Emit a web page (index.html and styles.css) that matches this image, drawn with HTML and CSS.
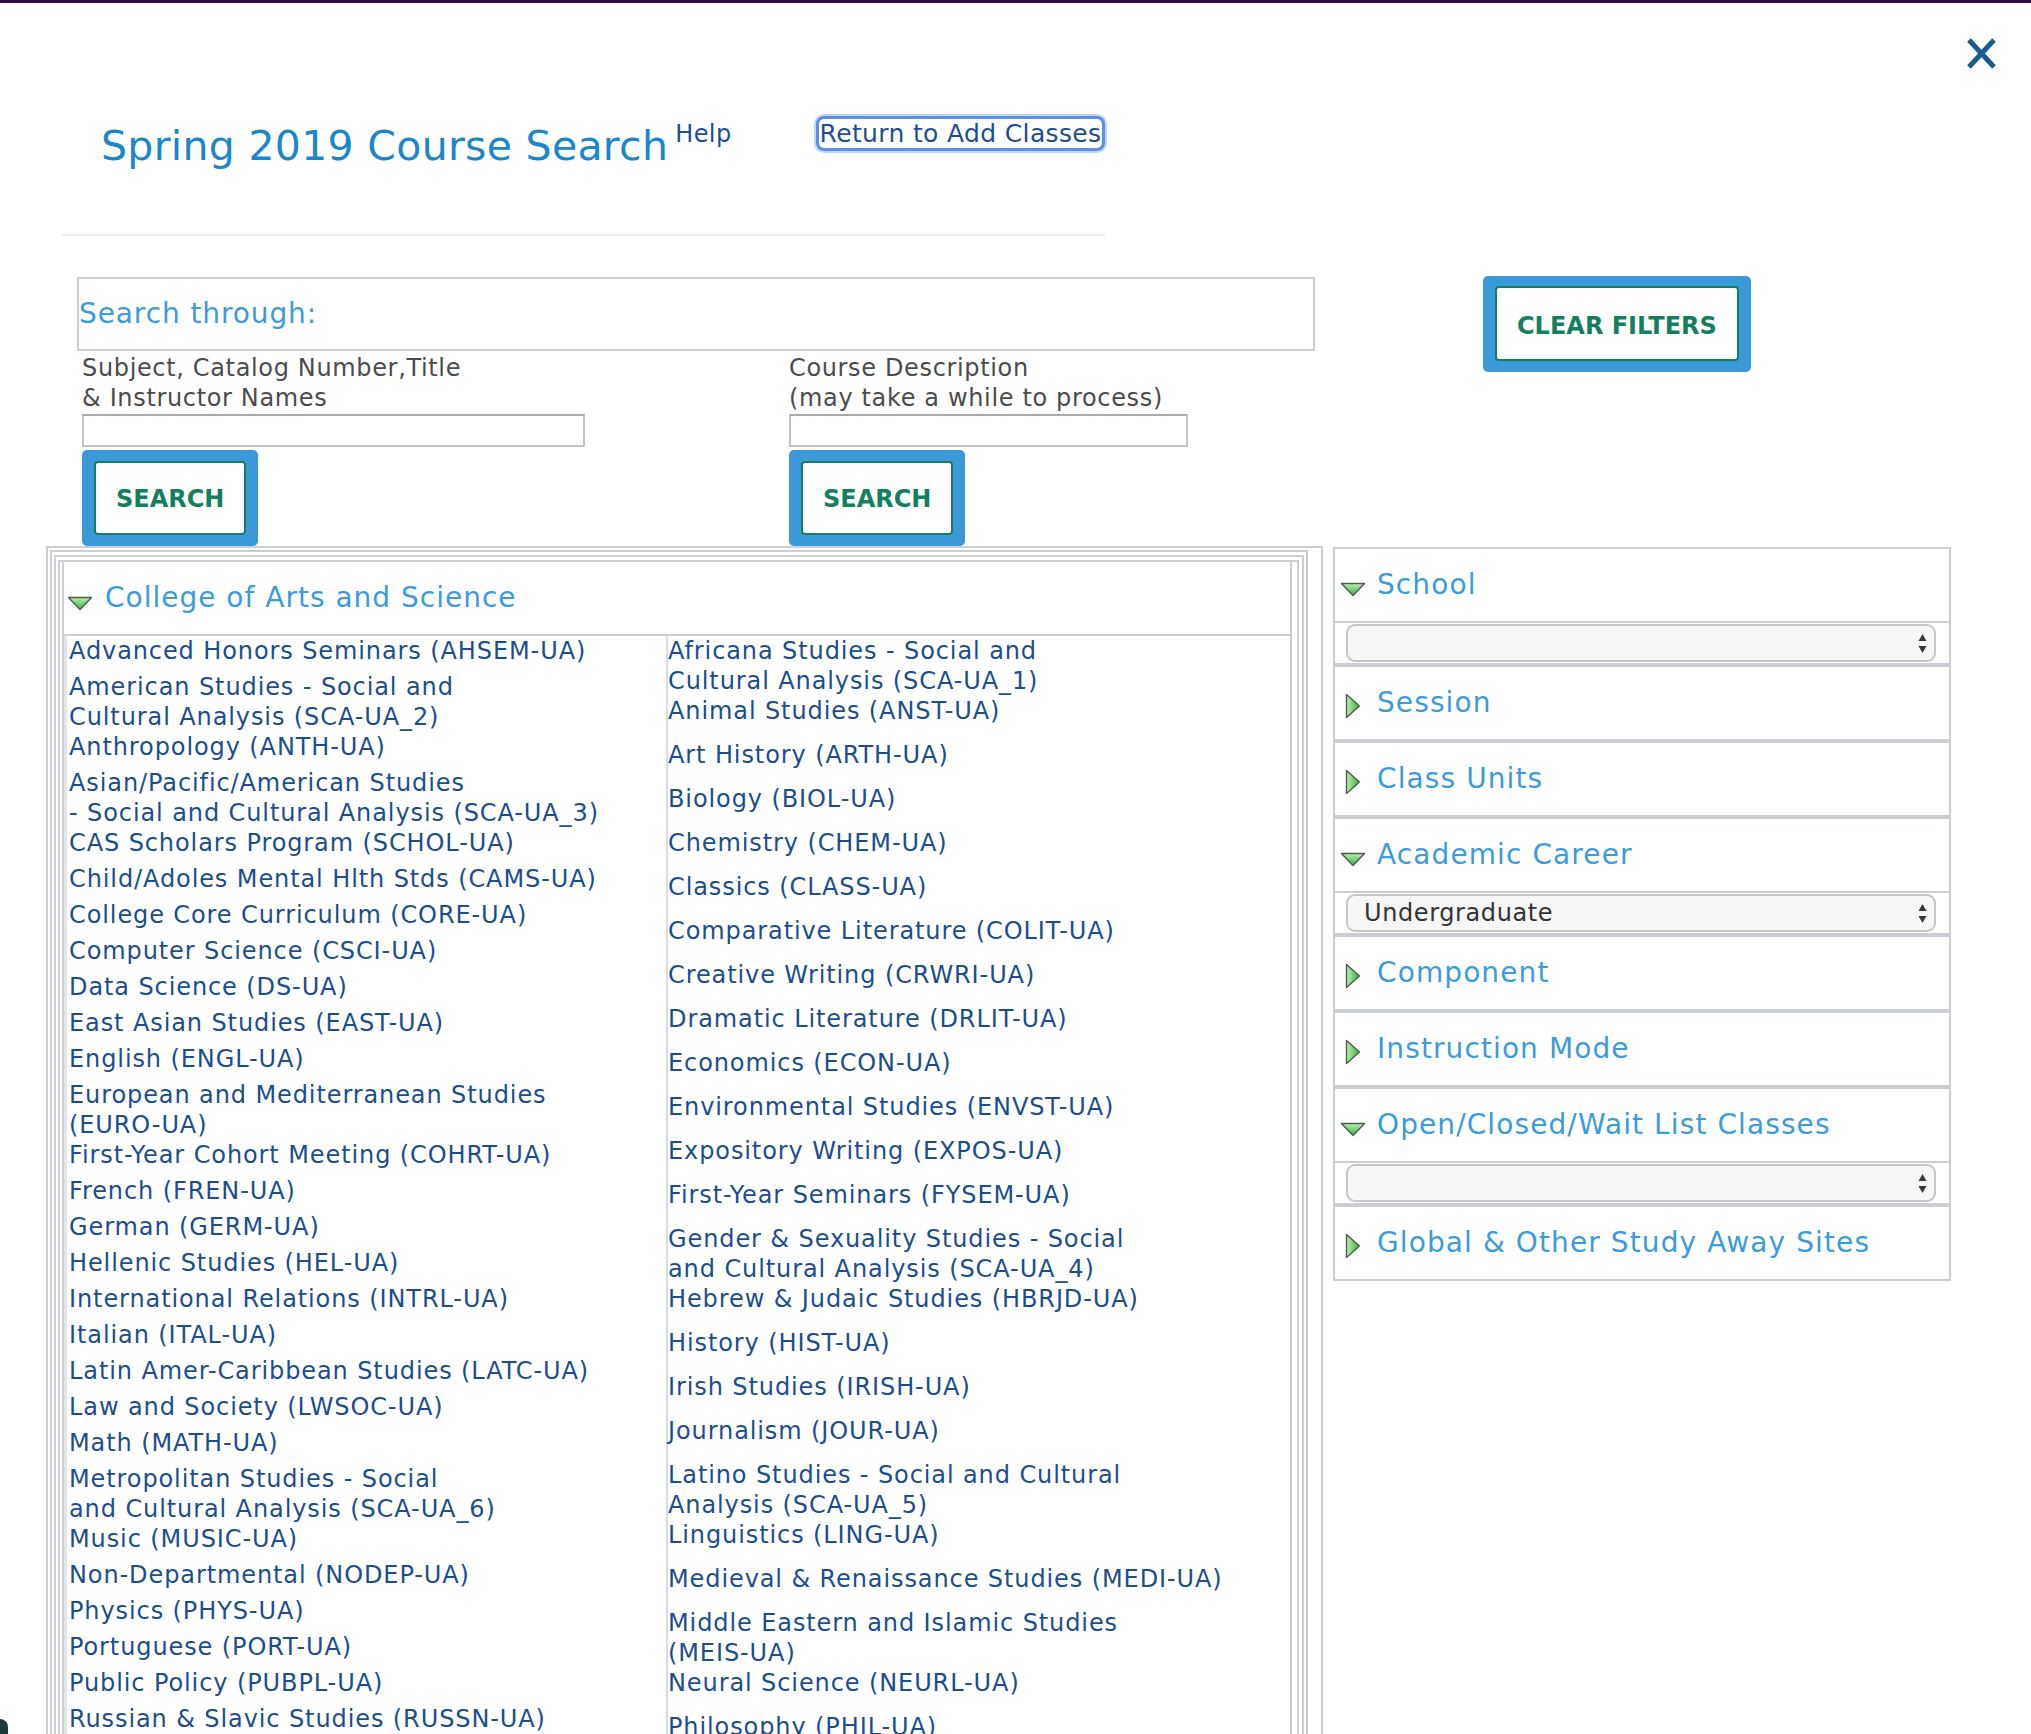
FILE: index.html
```html
<!DOCTYPE html>
<html lang="en">
<head>
<meta charset="utf-8">
<title>Spring 2019 Course Search</title>
<link rel="stylesheet" href="styles.css">
</head>
<body>
<svg class="defs" width="0" height="0" aria-hidden="true">
  <defs>
    <linearGradient id="gdown" x1="0" y1="0" x2="0" y2="1">
      <stop offset="0" stop-color="#b9f2ae"/>
      <stop offset="1" stop-color="#3cae48"/>
    </linearGradient>
    <linearGradient id="gright" x1="0" y1="0" x2="1" y2="0">
      <stop offset="0" stop-color="#b9f2ae"/>
      <stop offset="1" stop-color="#3cae48"/>
    </linearGradient>
  </defs>
</svg>
<div class="topbar"></div>
<div class="modal">
  <button class="close" aria-label="Close">
    <svg width="31" height="31" viewBox="0 0 31 31"><path d="M3 2 L28 29 M28 2 L3 29" stroke="#1a5b8c" stroke-width="5" fill="none"/></svg>
  </button>

  <div class="head">
    <h1 class="title">Spring 2019 Course Search</h1>
    <a class="help" href="#">Help</a>
    <a class="return" href="#">Return to Add Classes</a>
  </div>
  <div class="sep"></div>

  <div class="search-row">
    <div class="search-left">
      <div class="through">Search through:</div>
      <div class="fields">
        <div class="field">
          <div class="label">Subject, Catalog Number,Title<br>&amp; Instructor Names</div>
          <input class="inp inp-l" type="text">
          <div class="btnwrap"><button class="btn">SEARCH</button></div>
        </div>
        <div class="field">
          <div class="label">Course Description<br>(may take a while to process)</div>
          <input class="inp inp-r" type="text">
          <div class="btnwrap"><button class="btn">SEARCH</button></div>
        </div>
      </div>
    </div>
    <div class="btnwrap clearwrap"><button class="btn btn-clear">CLEAR FILTERS</button></div>
  </div>

  <div class="main">
    <div class="f1"><div class="f2"><div class="f3"><div class="f4"><div class="f5">
      <div class="lhead">
        <svg class="tri-down" width="26" height="15" viewBox="0 0 26 15"><polygon points="1.5,1.5 24.5,1.5 13,13.5" fill="url(#gdown)" stroke="#4f5a50" stroke-width="1.4" stroke-linejoin="round"/></svg>
        <span class="lt">College of Arts and Science</span>
      </div>
      <div class="cols">
        <div class="col col1">
          <a class="it" href="#">Advanced Honors Seminars (AHSEM-UA)</a>
          <a class="it" href="#">American Studies - Social and<br>Cultural Analysis (SCA-UA_2)</a>
          <a class="it" href="#">Anthropology (ANTH-UA)</a>
          <a class="it" href="#">Asian/Pacific/American Studies<br>- Social and Cultural Analysis (SCA-UA_3)</a>
          <a class="it" href="#">CAS Scholars Program (SCHOL-UA)</a>
          <a class="it" href="#">Child/Adoles Mental Hlth Stds (CAMS-UA)</a>
          <a class="it" href="#">College Core Curriculum (CORE-UA)</a>
          <a class="it" href="#">Computer Science (CSCI-UA)</a>
          <a class="it" href="#">Data Science (DS-UA)</a>
          <a class="it" href="#">East Asian Studies (EAST-UA)</a>
          <a class="it" href="#">English (ENGL-UA)</a>
          <a class="it" href="#">European and Mediterranean Studies<br>(EURO-UA)</a>
          <a class="it" href="#">First-Year Cohort Meeting (COHRT-UA)</a>
          <a class="it" href="#">French (FREN-UA)</a>
          <a class="it" href="#">German (GERM-UA)</a>
          <a class="it" href="#">Hellenic Studies (HEL-UA)</a>
          <a class="it" href="#">International Relations (INTRL-UA)</a>
          <a class="it" href="#">Italian (ITAL-UA)</a>
          <a class="it" href="#">Latin Amer-Caribbean Studies (LATC-UA)</a>
          <a class="it" href="#">Law and Society (LWSOC-UA)</a>
          <a class="it" href="#">Math (MATH-UA)</a>
          <a class="it" href="#">Metropolitan Studies - Social<br>and Cultural Analysis (SCA-UA_6)</a>
          <a class="it" href="#">Music (MUSIC-UA)</a>
          <a class="it" href="#">Non-Departmental (NODEP-UA)</a>
          <a class="it" href="#">Physics (PHYS-UA)</a>
          <a class="it" href="#">Portuguese (PORT-UA)</a>
          <a class="it" href="#">Public Policy (PUBPL-UA)</a>
          <a class="it" href="#">Russian &amp; Slavic Studies (RUSSN-UA)</a>
        </div>
        <div class="col col2">
          <a class="it" href="#">Africana Studies - Social and<br>Cultural Analysis (SCA-UA_1)</a>
          <a class="it" href="#">Animal Studies (ANST-UA)</a>
          <a class="it" href="#">Art History (ARTH-UA)</a>
          <a class="it" href="#">Biology (BIOL-UA)</a>
          <a class="it" href="#">Chemistry (CHEM-UA)</a>
          <a class="it" href="#">Classics (CLASS-UA)</a>
          <a class="it" href="#">Comparative Literature (COLIT-UA)</a>
          <a class="it" href="#">Creative Writing (CRWRI-UA)</a>
          <a class="it" href="#">Dramatic Literature (DRLIT-UA)</a>
          <a class="it" href="#">Economics (ECON-UA)</a>
          <a class="it" href="#">Environmental Studies (ENVST-UA)</a>
          <a class="it" href="#">Expository Writing (EXPOS-UA)</a>
          <a class="it" href="#">First-Year Seminars (FYSEM-UA)</a>
          <a class="it" href="#">Gender &amp; Sexuality Studies - Social<br>and Cultural Analysis (SCA-UA_4)</a>
          <a class="it" href="#">Hebrew &amp; Judaic Studies (HBRJD-UA)</a>
          <a class="it" href="#">History (HIST-UA)</a>
          <a class="it" href="#">Irish Studies (IRISH-UA)</a>
          <a class="it" href="#">Journalism (JOUR-UA)</a>
          <a class="it" href="#">Latino Studies - Social and Cultural<br>Analysis (SCA-UA_5)</a>
          <a class="it" href="#">Linguistics (LING-UA)</a>
          <a class="it" href="#">Medieval &amp; Renaissance Studies (MEDI-UA)</a>
          <a class="it" href="#">Middle Eastern and Islamic Studies<br>(MEIS-UA)</a>
          <a class="it" href="#">Neural Science (NEURL-UA)</a>
          <a class="it" href="#">Philosophy (PHIL-UA)</a>
        </div>
      </div>
    </div></div></div></div></div>

    <div class="panel">
      <div class="sec">
        <div class="phead"><span class="ic ic-down"><svg width="26" height="15" viewBox="0 0 26 15"><polygon points="1.5,1.5 24.5,1.5 13,13.5" fill="url(#gdown)" stroke="#4f5a50" stroke-width="1.4" stroke-linejoin="round"/></svg></span><span class="pt">School</span></div>
        <div class="selrow"><div class="select"><span class="sv"></span><svg width="9" height="21" viewBox="0 0 9 21"><polygon points="0.5,8 4.5,1 8.5,8" fill="#3a3a3a"/><polygon points="0.5,13 4.5,20 8.5,13" fill="#3a3a3a"/></svg></div></div>
      </div>
      <div class="sec">
        <div class="phead closed"><span class="ic ic-right"><svg width="16" height="26" viewBox="0 0 16 26"><polygon points="1.5,1.5 14.5,13 1.5,24.5" fill="url(#gright)" stroke="#4f5a50" stroke-width="1.4" stroke-linejoin="round"/></svg></span><span class="pt">Session</span></div>
      </div>
      <div class="sec">
        <div class="phead closed"><span class="ic ic-right"><svg width="16" height="26" viewBox="0 0 16 26"><polygon points="1.5,1.5 14.5,13 1.5,24.5" fill="url(#gright)" stroke="#4f5a50" stroke-width="1.4" stroke-linejoin="round"/></svg></span><span class="pt">Class Units</span></div>
      </div>
      <div class="sec">
        <div class="phead"><span class="ic ic-down"><svg width="26" height="15" viewBox="0 0 26 15"><polygon points="1.5,1.5 24.5,1.5 13,13.5" fill="url(#gdown)" stroke="#4f5a50" stroke-width="1.4" stroke-linejoin="round"/></svg></span><span class="pt">Academic Career</span></div>
        <div class="selrow"><div class="select"><span class="sv">Undergraduate</span><svg width="9" height="21" viewBox="0 0 9 21"><polygon points="0.5,8 4.5,1 8.5,8" fill="#3a3a3a"/><polygon points="0.5,13 4.5,20 8.5,13" fill="#3a3a3a"/></svg></div></div>
      </div>
      <div class="sec">
        <div class="phead closed"><span class="ic ic-right"><svg width="16" height="26" viewBox="0 0 16 26"><polygon points="1.5,1.5 14.5,13 1.5,24.5" fill="url(#gright)" stroke="#4f5a50" stroke-width="1.4" stroke-linejoin="round"/></svg></span><span class="pt">Component</span></div>
      </div>
      <div class="sec">
        <div class="phead closed"><span class="ic ic-right"><svg width="16" height="26" viewBox="0 0 16 26"><polygon points="1.5,1.5 14.5,13 1.5,24.5" fill="url(#gright)" stroke="#4f5a50" stroke-width="1.4" stroke-linejoin="round"/></svg></span><span class="pt">Instruction Mode</span></div>
      </div>
      <div class="sec">
        <div class="phead"><span class="ic ic-down"><svg width="26" height="15" viewBox="0 0 26 15"><polygon points="1.5,1.5 24.5,1.5 13,13.5" fill="url(#gdown)" stroke="#4f5a50" stroke-width="1.4" stroke-linejoin="round"/></svg></span><span class="pt">Open/Closed/Wait List Classes</span></div>
        <div class="selrow"><div class="select"><span class="sv"></span><svg width="9" height="21" viewBox="0 0 9 21"><polygon points="0.5,8 4.5,1 8.5,8" fill="#3a3a3a"/><polygon points="0.5,13 4.5,20 8.5,13" fill="#3a3a3a"/></svg></div></div>
      </div>
      <div class="sec">
        <div class="phead closed"><span class="ic ic-right"><svg width="16" height="26" viewBox="0 0 16 26"><polygon points="1.5,1.5 14.5,13 1.5,24.5" fill="url(#gright)" stroke="#4f5a50" stroke-width="1.4" stroke-linejoin="round"/></svg></span><span class="pt">Global &amp; Other Study Away Sites</span></div>
      </div>
    </div>
  </div>
</div>
<div class="corner"></div>
</body>
</html>
```

FILE: styles.css
```css
* { box-sizing: border-box; }
html, body { margin: 0; padding: 0; height: 1734px; overflow: hidden; }
body { background: #fff; font-family: "DejaVu Sans", "Liberation Sans", sans-serif; }

.defs { display: block; width: 0; height: 0; }

.topbar { height: 3px; background: #2b0f3d; }
.modal { position: relative; background: #fff; }

.close {
  position: absolute; top: 35px; right: 34px;
  width: 31px; height: 31px; padding: 0; border: 0; background: none;
}
.close svg { display: block; }

/* header */
.head { display: flex; align-items: flex-start; padding: 115px 0 0 101px; }
.title {
  margin: 4px 0 0; font-size: 41px; line-height: 48px; font-weight: normal;
  color: #1b87c9; letter-spacing: 0.3px;
}
.help {
  margin: 2px 0 0 7px; font-size: 24px; line-height: 28px; letter-spacing: 0.4px;
  color: #1d4e8f; text-decoration: none;
}
.return {
  margin: 0.6px 0 0 87px; padding: 0 1px; font-size: 25px; line-height: 29px;
  letter-spacing: 0.35px;
  color: #1d4e8f; text-decoration: none; border-radius: 5px;
  box-shadow: 0 0 0 3px #5a90ea, 0 0 0 5px rgba(120, 165, 240, 0.45);
}
.sep { margin: 64px 0 0 62px; width: 1043px; height: 2px; background: #ececec; }

/* search */
.search-row { display: flex; align-items: flex-start; margin-top: 41px; padding-left: 77px; }
.search-left { width: 1238px; }
.through {
  height: 74px; border: 2px solid #cbcfd4; line-height: 70px;
  font-size: 28px; letter-spacing: 0.9px; color: #3b9bdb;
}
.fields { display: grid; grid-template-columns: 707px 1fr; padding-left: 5px; }
.label {
  margin-top: 2px; font-size: 24px; line-height: 30px; letter-spacing: 0.65px; color: #4b4b4b;
}
.inp {
  display: block; margin-top: 1px; height: 33px; padding: 0 6px;
  border: 2px solid #c3c3c3; border-top-color: #a9a9a9; background: #fff;
  font-family: inherit; font-size: 20px;
}
.inp-l { width: 503px; }
.inp-r { width: 399px; }

.btnwrap {
  display: inline-block; margin-top: 3px; padding: 11px 12px;
  background: #3b99d8; border-radius: 5px;
}
.btn {
  display: block; height: 74px; padding: 0 20px; margin: 0;
  background: #fff; border: 2px solid #147f5f; border-radius: 4px;
  font-family: inherit; font-size: 24px; font-weight: bold; color: #147f5f;
  line-height: 72px;
}
.clearwrap { margin: -1px 0 0 168px; padding: 10px 12px 11px; }
.btn-clear { height: 75px; padding: 0 20px; line-height: 76px; }

/* main */
.main { display: flex; align-items: flex-start; padding-left: 46px; }

.f1 { width: 1277px; border: 2px solid #cbcfd4; border-bottom: 0; padding: 2px 13px 0 2px; }
.f2 { border: 2px solid #cbcfd4; border-bottom: 0; padding: 3px 2px 0 2px; }
.f3 { border: 2px solid #cbcfd4; border-bottom: 0; padding: 3px 3px 0 2px; }
.f4 { border: 2px solid #cbcfd4; border-bottom: 0; padding: 0 5px 0 2px; }
.f5 { border-left: 2px solid #cbcfd4; border-right: 2px solid #cbcfd4; padding-bottom: 60px; }

.lhead {
  height: 74px; display: flex; align-items: center; padding-left: 3px;
  border-bottom: 2px solid #cbcfd4;
}
.tri-down { display: block; margin: 10px 12px 0 0; }
.lt { margin-top: -2px; font-size: 28px; letter-spacing: 1px; color: #3b9bdb; }

.cols { display: flex; }
.col1 { width: 602px; border-left: 3px solid #e3e5e8; padding-left: 2px; }
.col2 { flex: 1; border-left: 2px solid #d9dce0; padding-left: 0; }
.it {
  display: block; font-size: 24px; line-height: 30px; letter-spacing: 0.9px;
  color: #1c4d8d; text-decoration: none; white-space: nowrap;
}
.col1 .it { min-height: 36px; }
.col2 .it { min-height: 44px; }

/* filter panel */
.panel {
  width: 618px; margin: 1px 0 0 10px;
  border-left: 2px solid #cbcfd4; border-right: 2px solid #cbcfd4;
}
.sec { border-top: 2px solid #cbcfd4; border-bottom: 2px solid #cbcfd4; }
.phead {
  height: 74px; display: flex; align-items: center; padding-left: 1px;
  border-bottom: 2px solid #cbcfd4;
}
.phead.closed { height: 72px; border-bottom: 0; }
.ic { width: 33px; display: flex; justify-content: center; margin-right: 8px; }
.ic svg { display: block; }
.ic-down { margin-top: 8px; }
.ic-right { margin-top: 5px; }
.pt { margin-top: -2px; font-size: 28px; letter-spacing: 1.1px; color: #3b9bdb; }

.selrow { height: 40px; padding: 1px 13px 0 11px; }
.select {
  height: 38px; display: flex; align-items: center; justify-content: space-between;
  padding: 0 7px 0 16px; border: 2px solid #c6c6c6; border-radius: 9px; background: #f6f6f6;
  font-size: 24px; letter-spacing: 0.6px; color: #333;
}
.select svg { display: block; }

.corner {
  position: fixed; left: 0; bottom: 0; width: 8px; height: 15px;
  background: #1f3b3b; border-top-right-radius: 10px;
}
```
